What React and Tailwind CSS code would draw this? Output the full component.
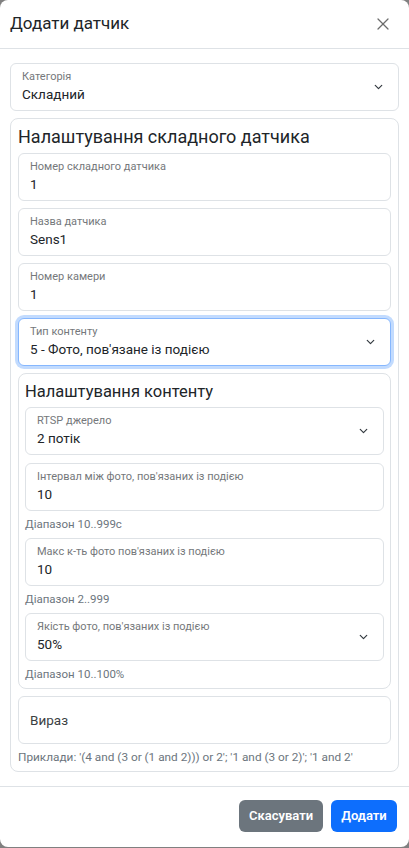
import { X, ChevronDown } from "lucide-react";

const font = { fontFamily: 'Roboto, "Noto Sans", sans-serif' };

function FloatField({ label, value, select, focused }) {
  return (
    <div
      className={`relative h-[48px] rounded-md border bg-white px-[11px] ${
        focused
          ? "border-[#86b7fe] shadow-[0_0_0_3px_rgba(13,110,253,0.25)]"
          : "border-[#dee2e6]"
      }`}
    >
      <div className="pt-[5px] text-[11px] leading-[16px] text-[#75787b]">{label}</div>
      <div className="text-[13.5px] leading-[18px] text-[#212529]">{value}</div>
      {select && (
        <ChevronDown
          className="absolute right-[13px] top-1/2 -translate-y-1/2 w-[13px] h-[13px] text-[#343a40]"
          strokeWidth={2.2}
        />
      )}
    </div>
  );
}

function Hint({ children }) {
  return (
    <div className="mt-[4px] mb-[5px] text-[11.5px] leading-[18px] text-[#6c757d]">{children}</div>
  );
}

export default function App() {
  return (
    <div className="min-h-[848px] bg-[#808080]" style={font}>
      <div className="h-[847px] bg-white rounded-lg flex flex-col">
        <div className="h-[49px] shrink-0 border-b border-[#dee2e6] flex items-center justify-between px-[10px]">
          <h1 className="text-[17px] text-[#212529]">Додати датчик</h1>
          <X className="w-[20px] h-[20px] mr-[6px] text-[#6c6c6c]" strokeWidth={1.5} />
        </div>

        <div className="flex-1 px-[10px] pt-[14px]">
          <FloatField label="Категорія" value="Складний" select />

          <fieldset className="mt-[7px] rounded-lg border border-[#dee2e6] px-[7px] pt-[4px] pb-[5px]">
            <div className="text-[18px] leading-[28px] text-[#212529] mb-[2px]">
              Налаштування складного датчика
            </div>
            <div className="flex flex-col gap-[7px]">
              <FloatField label="Номер складного датчика" value="1" />
              <FloatField label="Назва датчика" value="Sens1" />
              <FloatField label="Номер камери" value="1" />
              <FloatField label="Тип контенту" value="5 - Фото, пов'язане із подією" select focused />

              <fieldset className="rounded-lg border border-[#dee2e6] px-[6px] pt-[4px]">
                <div className="text-[16.5px] leading-[28px] text-[#212529] mb-[1px]">Налаштування контенту</div>
                <FloatField label="RTSP джерело" value="2 потік" select />
                <div className="h-[8px]" />
                <FloatField label="Інтервал між фото, пов'язаних із подією" value="10" />
                <Hint>Діапазон 10..999с</Hint>
                <FloatField label="Макс к-ть фото пов'язаних із подією" value="10" />
                <Hint>Діапазон 2..999</Hint>
                <FloatField label="Якість фото, пов'язаних із подією" value="50%" select />
                <Hint>Діапазон 10..100%</Hint>
              </fieldset>

              <div className="h-[48px] rounded-md border border-[#dee2e6] px-[11px] flex items-center text-[13.5px] text-[#3b3f43]">
                Вираз
              </div>
            </div>
            <div className="mt-[4px] text-[11.8px] leading-[18px] text-[#6c757d]">
              Приклади: '(4 and (3 or (1 and 2))) or 2'; '1 and (3 or 2)'; '1 and 2'
            </div>
          </fieldset>
        </div>

        <div className="h-[61px] shrink-0 border-t border-[#dee2e6] flex items-start justify-end gap-[8px] pt-[13px] pr-[12px]">
          <button className="h-[32px] w-[84px] rounded-md bg-[#6c757d] text-white text-[13px] font-semibold">
            Скасувати
          </button>
          <button className="h-[32px] w-[66px] rounded-md bg-[#0d6efd] text-white text-[13px] font-semibold">
            Додати
          </button>
        </div>
      </div>
    </div>
  );
}
